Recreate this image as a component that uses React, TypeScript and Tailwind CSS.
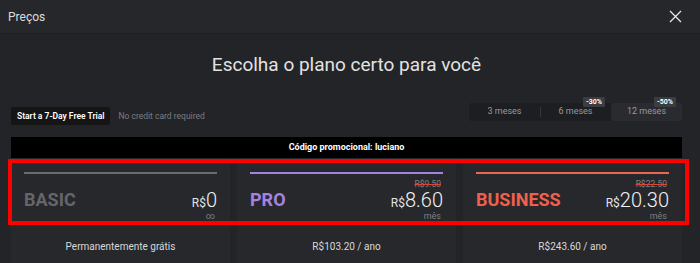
import React from 'react';

interface Plan {
    name: string;
    color: string;
    line: string;
    oldPrice?: string;
    price: string;
    unit: string;
    footer: string;
}

const plans: Plan[] = [
    { name: 'BASIC', color: 'text-[#65666a]', line: 'bg-[#6a6b6e]', price: '0', unit: '∞', footer: 'Permanentemente grátis' },
    { name: 'PRO', color: 'text-[#a482e0]', line: 'bg-[#a482e0]', oldPrice: 'R$9.50', price: '8.60', unit: 'mês', footer: 'R$103.20 / ano' },
    { name: 'BUSINESS', color: 'text-[#f0604c]', line: 'bg-[#ee6550]', oldPrice: 'R$22.50', price: '20.30', unit: 'mês', footer: 'R$243.60 / ano' },
];

const periods = [
    { label: '3 meses' },
    { label: '6 meses', badge: '-30%' },
    { label: '12 meses', badge: '-50%', active: true },
];

function PlanCard({ plan }: { plan: Plan }) {
    return (
        <div className="flex-1 bg-[#27282c] px-[13px] pt-[14px] flex flex-col">
            <div className={`h-[2px] ${plan.line}`} />
            <div className="flex items-center justify-between h-[50px]">
                <span className={`text-[18px] font-bold ${plan.color}`}>{plan.name}</span>
                <div className="flex flex-col items-end pt-[2px]">
                    {/* old price with red strike */}
                    <span className="text-[8.5px] leading-[10px] h-[10px] text-[#808184] line-through decoration-[#d9473a] pr-[2px]">
                        {plan.oldPrice ?? ''}
                    </span>
                    <div className="flex items-baseline leading-[22px] h-[22px]">
                        <span className="text-[12px] text-[#e4e4e4]">R$</span>
                        <span className="text-[20px] font-light text-[#f2f2f2]">{plan.price}</span>
                    </div>
                    <span className="text-[9px] leading-[10px] text-[#7d7e81] pr-[2px]">{plan.unit}</span>
                </div>
            </div>
            <div className="text-center text-[10px] text-[#d8d8d8] pt-[15px]">{plan.footer}</div>
        </div>
    );
}

export default function App() {
    return (
        <div className="w-[700px] h-[263px] overflow-hidden bg-[#232428] relative" style={{ fontFamily: 'Roboto, "Liberation Sans", sans-serif' }}>
            {/* header */}
            <div className="h-[34px] bg-[#26272b] border-b border-[#1d1e21] flex items-center justify-between pl-[8px] pr-[18px]">
                <span className="text-[12px] text-[#dcdcdc]">Preços</span>
                <svg width="13" height="13" viewBox="0 0 13 13" fill="none" stroke="#e6e6e6" strokeWidth="1.3">
                    <path d="M1 1L12 12M12 1L1 12" />
                </svg>
            </div>

            <div className="pl-[11px] pr-[18px]">
                <h1 className="text-center text-[19px] text-[#e2e2e2] mt-[18px] leading-[26px]">
                    Escolha o plano certo para você
                </h1>

                <div className="flex items-end justify-between mt-[25px]">
                    <div className="flex items-center gap-[8px] mb-[4px]">
                        <button className="h-[18px] px-[6px] bg-[#151516] rounded-[2px] text-[8.5px] font-semibold text-white">
                            Start a 7-Day Free Trial
                        </button>
                        <span className="text-[8.5px] text-[#7b7c80]">No credit card required</span>
                    </div>
                    <div className="flex w-[213px] h-[18px] bg-[#1d1e22] rounded-[2px] mb-[8px]">
                        {periods.map((p, i) => (
                            <div
                                key={p.label}
                                className={`relative flex-1 flex items-center justify-center text-[9px] text-[#98999c] ${p.active ? 'bg-[#2a2b30] rounded-[2px]' : ''}`}
                            >
                                {i === 1 && <span className="absolute left-0 top-[4px] h-[10px] w-px bg-[#34353a]" />}
                                {p.label}
                                {p.badge && (
                                    <span className="absolute right-[6px] top-[-6px] h-[10px] px-[3px] bg-[#3b3c40] rounded-[1px] text-[7px] leading-[10px] font-bold text-white">
                                        {p.badge}
                                    </span>
                                )}
                            </div>
                        ))}
                    </div>
                </div>

                <div className="mt-[8px] h-[21px] bg-black flex items-center justify-center text-[9px] font-bold text-white">
                    Código promocional: luciano
                </div>

                <div className="flex gap-[7px] h-[110px]">
                    {plans.map((p) => (
                        <PlanCard key={p.name} plan={p} />
                    ))}
                </div>
            </div>

            {/* red highlight annotation */}
            <div className="absolute left-[8px] top-[159px] w-[681px] h-[66px] border-[4px] border-[#ff0000]" />
        </div>
    );
}
